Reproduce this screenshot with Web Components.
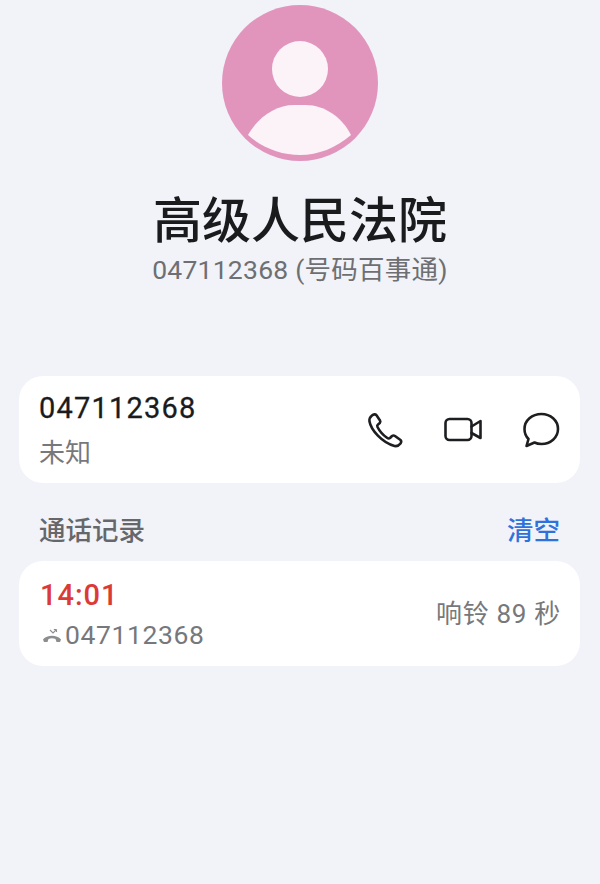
<!DOCTYPE html>
<html lang="zh">
<head>
<meta charset="utf-8">
<title>通话详情</title>
<style>
    html, body { margin: 0; padding: 0; }
    body {
        width: 600px;
        height: 884px;
        overflow: hidden;
        background: #f1f3f8;
        font-family: Roboto, "Noto Sans CJK SC", sans-serif;
    }
</style>
</head>
<body>
<contact-header name="高级人民法院" sub="047112368 (号码百事通)"></contact-header>
<number-card number="047112368" place="未知"></number-card>
<log-heading title="通话记录" action="清空"></log-heading>
<call-row time="14:01" number="047112368" note="响铃 89 秒"></call-row>

<script>
    class ContactHeader extends HTMLElement {
        constructor() {
            super()
            this.attachShadow({mode: 'open'})
            this.shadowRoot.innerHTML = `
            <style>
                :host { display: flex; flex-direction: column; align-items: center; padding-top: 5px; height: 376px; box-sizing: border-box; }
                svg { display: block; }
                .name { margin-top: 25px; font-size: 49px; line-height: 72px; font-weight: 500; color: #1a1b1d; white-space: nowrap; }
                .sub { margin-top: -5px; font-size: 26.500px; line-height: 34px; color: #6e6f72; white-space: nowrap; letter-spacing: .25px; }
            </style>
            <svg width="156" height="156" viewBox="0 0 156 156">
                <circle cx="78" cy="78" r="78" fill="#e295bc"/>
                <circle cx="78" cy="64" r="28" fill="#fbf3f8"/>
                <path d="M26 130C36 112 54 100 72 100H84C102 100 120 112 129 130C114 143 96 150 78 150C60 150 40 143 26 130Z" fill="#fbf3f8"/>
            </svg>
            <div class="name">${this.getAttribute('name')}</div>
            <div class="sub">${this.getAttribute('sub')}</div>`
        }
    }
    customElements.define('contact-header', ContactHeader)

    class NumberCard extends HTMLElement {
        constructor() {
            super()
            this.attachShadow({mode: 'open'})
            this.shadowRoot.innerHTML = `
            <style>
                :host { display: flex; align-items: center; justify-content: space-between; margin: 0 20px 0 19px; height: 107px; padding: 0 20px; background: #fff; border-radius: 24px; }
                .number { margin-top: 1px; font-size: 29px; line-height: 40px; letter-spacing: 1.2px; color: #1a1b1d; -webkit-text-stroke: .3px #1a1b1d; }
                .place { margin-top: 6px; font-size: 26px; line-height: 38px; color: #77787b; }
                .icons { display: flex; gap: 40px; align-items: center; }
                svg { display: block; fill: none; stroke: #1d1e20; stroke-width: 2.6; stroke-linejoin: round; stroke-linecap: round; }
            </style>
            <div>
                <div class="number">${this.getAttribute('number')}</div>
                <div class="place">${this.getAttribute('place')}</div>
            </div>
            <div class="icons">
                <svg width="38" height="38" viewBox="0 0 38 38"><path d="M6 4.500C4 6 3 7.500 3.500 10.500C5 19 16 31.500 28.500 35C31 35.500 33 34.500 34.500 32.500C35.500 31 35.500 30 34.500 29L29 25C28 24.300 27 24.300 26 25L24 27C23 27.800 22 27.500 21 26.800C17 24 13.500 20 11.500 16C11 15 11 14.300 12 13.500L13.800 12C14.500 11 14.500 10.300 14 9.500L10.500 4.300C9.500 3 7.500 3 6 4.500Z"/></svg>
                <svg width="38" height="38" viewBox="0 0 38 38"><rect x="1.500" y="8" width="26" height="21" rx="4"/><path d="M27.500 15.500L36.500 10V27L27.500 22"/></svg>
                <svg width="38" height="38" viewBox="0 0 38 38"><path d="M19.500 3C28.500 3 36 9.500 36 18C36 26.500 28.500 33 19.500 33C17 33 14.500 32.500 12.500 31.500L4.500 35L6.500 28C3.800 25.300 2.500 22 2.500 18C2.500 9.500 10 3 19.500 3Z"/></svg>
            </div>`
        }
    }
    customElements.define('number-card', NumberCard)

    class LogHeading extends HTMLElement {
        constructor() {
            super()
            this.attachShadow({mode: 'open'})
            this.shadowRoot.innerHTML = `
            <style>
                :host { display: flex; align-items: center; justify-content: space-between; height: 78px; padding: 12px 40px 0 39px; box-sizing: border-box; font-size: 26.500px; }
                .title { color: #66676a; font-weight: 500; }
                .action { color: #2f72dc; font-weight: 500; }
            </style>
            <div class="title">${this.getAttribute('title')}</div>
            <div class="action">${this.getAttribute('action')}</div>`
        }
    }
    customElements.define('log-heading', LogHeading)

    class CallRow extends HTMLElement {
        constructor() {
            super()
            this.attachShadow({mode: 'open'})
            this.shadowRoot.innerHTML = `
            <style>
                :host { display: flex; align-items: center; justify-content: space-between; margin: 0 20px 0 19px; height: 105px; padding: 0 20px 0 21px; background: #fff; border-radius: 24px; }
                .time { font-size: 29px; line-height: 40px; font-weight: 500; letter-spacing: 1px; color: #dc3a37; }
                .line { display: flex; align-items: center; gap: 3px; margin-top: 2px; font-size: 26.500px; line-height: 36px; color: #77787b; letter-spacing: .6px; }
                .line svg { margin-left: 2px; }
                .note { margin: 0 -1px 4px 0; font-size: 26px; color: #77787b; letter-spacing: .7px; }
                svg { display: block; }
            </style>
            <div>
                <div class="time">${this.getAttribute('time')}</div>
                <div class="line">
                    <svg width="20" height="18" viewBox="0 0 20 18"><path d="M1 13.500C5 8.500 15 8.500 19 13.500L18 16H14.500L13.500 13C11.500 12 8.500 12 6.500 13L5.500 16H2Z" fill="#8c8d90"/><path d="M8 4L11 7L14.500 3.500M14.500 3.500H11.800M14.500 3.500V6" fill="none" stroke="#8c8d90" stroke-width="1.100"/></svg>
                    <span>${this.getAttribute('number')}</span>
                </div>
            </div>
            <div class="note">${this.getAttribute('note')}</div>`
        }
    }
    customElements.define('call-row', CallRow)
</script>
</body>
</html>
